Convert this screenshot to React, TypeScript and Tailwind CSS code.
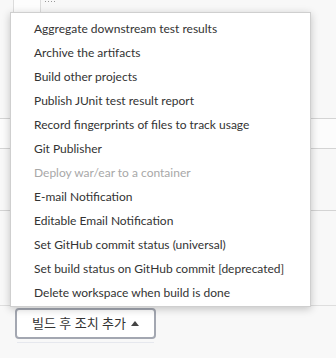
import React from "react";

const items: { label: string; disabled?: boolean }[] = [
  { label: "Aggregate downstream test results" },
  { label: "Archive the artifacts" },
  { label: "Build other projects" },
  { label: "Publish JUnit test result report" },
  { label: "Record fingerprints of files to track usage" },
  { label: "Git Publisher" },
  { label: "Deploy war/ear to a container", disabled: true },
  { label: "E-mail Notification" },
  { label: "Editable Email Notification" },
  { label: "Set GitHub commit status (universal)" },
  { label: "Set build status on GitHub commit [deprecated]" },
  { label: "Delete workspace when build is done" },
];

export default function App() {
  return (
    <div className="relative w-[336px] h-[358px] overflow-hidden bg-[#f8f8f8] text-[#333] font-['Lato','Noto_Sans','Noto_Sans_CJK_KR',sans-serif]">
      {/* background page content */}
      <div className="h-[118px] flex">
        <div className="ml-[13px] w-[28px] h-full border-l border-r border-[#dcdcdc] bg-[#fdfdfd]" />
        <div className="pl-[4px] pt-[1px] flex gap-[2px]">
          <div className="w-[1px] h-[1px] bg-[#999]" />
          <div className="w-[1px] h-[1px] bg-[#999]" />
          <div className="w-[1px] h-[1px] bg-[#999]" />
          <div className="w-[1px] h-[1px] bg-[#999]" />
        </div>
      </div>
      <div className="h-[30px] border-t border-[#d4d4d4] bg-[#fcfcfc]" />
      <div className="h-[62px] border-t border-[#d4d4d4]" />
      <div className="h-[95px] border-t border-[#d4d4d4]" />
      <div className="border-t border-[#dedede] pt-[2px] pl-[15px]">
        <button className="w-[141px] h-[31px] border-2 border-[#a3a7b1] rounded-[4px] bg-white flex items-center justify-center gap-[5px] text-[13px] text-[#333] font-['Noto_Sans','Noto_Sans_CJK_KR',sans-serif]">
          <span>빌드 후 조치 추가</span>
          <svg width="8" height="5" viewBox="0 0 8 5" className="mb-[1px]">
            <path d="M0 5 L4 0 L8 5 Z" fill="#444" />
          </svg>
        </button>
        <div className="mt-[3px] ml-[2px] w-[137px] h-px bg-[#e6e8ee]" />
      </div>

      {/* dropdown menu overlay */}
      <div className="absolute left-[10px] top-[12px] w-[301px] bg-white border border-[#cfcfcf] shadow-[0_2px_8px_rgba(0,0,0,0.22)] pt-[4px] pb-[1px]">
        {items.map((it) => (
          <div
            key={it.label}
            className={
              it.disabled
                ? "h-[24px] flex items-center pl-[23px] text-[12px] whitespace-nowrap text-[#a8a8a8]"
                : "h-[24px] flex items-center pl-[23px] text-[12px] whitespace-nowrap text-[#333]"
            }
          >
            {it.label}
          </div>
        ))}
      </div>
    </div>
  );
}
